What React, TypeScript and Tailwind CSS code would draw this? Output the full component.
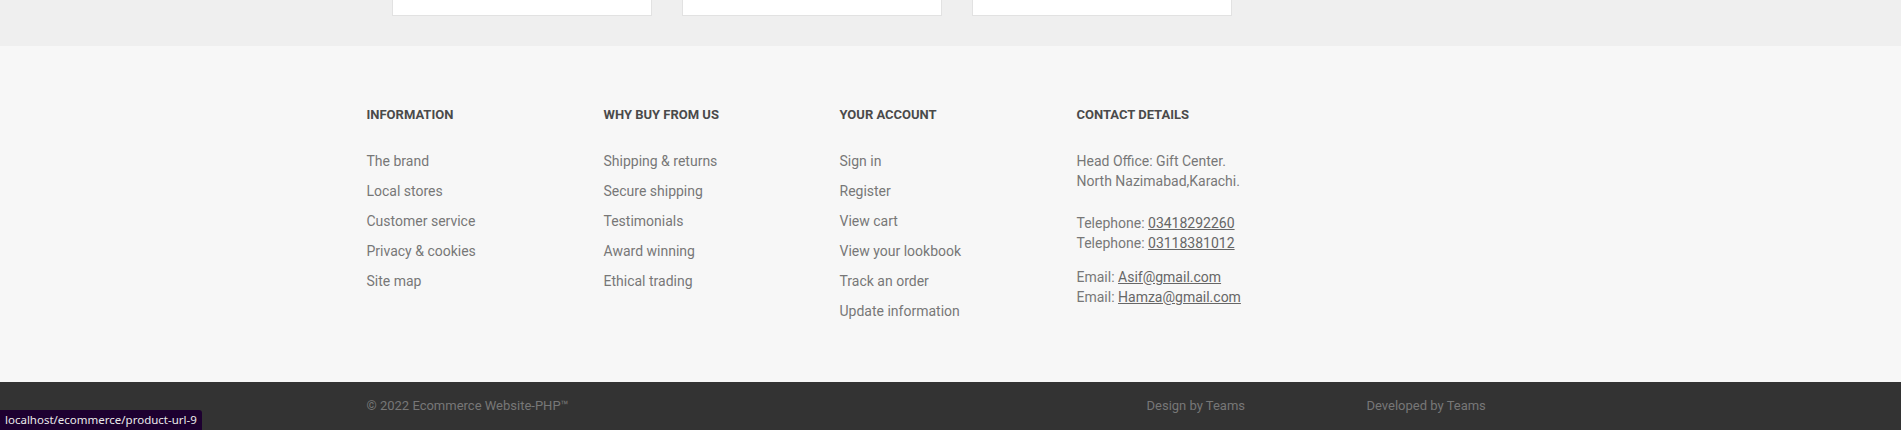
import React from 'react'

const information = ['The brand', 'Local stores', 'Customer service', 'Privacy & cookies', 'Site map']
const whyBuy = ['Shipping & returns', 'Secure shipping', 'Testimonials', 'Award winning', 'Ethical trading']
const account = ['Sign in', 'Register', 'View cart', 'View your lookbook', 'Track an order', 'Update information']

function LinkColumn({ title, links, width }: { title: string; links: string[]; width: string }) {
  return (
    <div className={`${width} shrink-0`}>
      <h4 className="text-[13px] leading-[18px] font-bold uppercase text-[#4a4a4a] mb-[27px]">{title}</h4>
      <ul className="flex flex-col gap-[10px] text-[14px] leading-[20px]">
        {links.map((l) => (
          <li key={l}>
            <a href="#" className="text-[#777]">
              {l}
            </a>
          </li>
        ))}
      </ul>
    </div>
  )
}

export default function App() {
  return (
    <div
      className="relative h-[430px] w-full overflow-hidden bg-[#f7f7f7]"
      style={{ fontFamily: 'Roboto, "Liberation Sans", sans-serif' }}
    >
      {/* product cards peeking from above */}
      <div className="h-[46px] bg-[#efefef]">
        <div className="mx-auto w-[1170px] pl-[26px] flex gap-[30px]">
          {[0, 1, 2].map((i) => (
            <div key={i} className="w-[260px] h-[16px] bg-white border-x border-b border-[#e2e2e2]" />
          ))}
        </div>
      </div>

      <footer className="h-[336px] pt-[60px]">
        <div className="mx-auto w-[1170px] pl-[1px] flex">
          <LinkColumn title="Information" links={information} width="w-[237px]" />
          <LinkColumn title="Why buy from us" links={whyBuy} width="w-[236px]" />
          <LinkColumn title="Your account" links={account} width="w-[237px]" />
          <div className="w-[237px] shrink-0 text-[14px] leading-[20px] text-[#777]">
            <h4 className="text-[13px] leading-[18px] font-bold uppercase text-[#4a4a4a] mb-[27px]">Contact details</h4>
            <p className="mb-[22px]">
              Head Office: Gift Center.
              <br />
              North Nazimabad,Karachi.
            </p>
            <p className="mb-[14px]">
              Telephone: <a href="#" className="underline text-[#666]">03418292260</a>
              <br />
              Telephone: <a href="#" className="underline text-[#666]">03118381012</a>
            </p>
            <p>
              Email: <a href="#" className="underline text-[#666]">Asif@gmail.com</a>
              <br />
              Email: <a href="#" className="underline text-[#666]">Hamza@gmail.com</a>
            </p>
          </div>
        </div>
      </footer>

      <div className="h-[48px] bg-[#333] pt-[15px]">
        <div className="mx-auto w-[1170px] pl-[1px] flex text-[13px] leading-[18px] text-[#777]">
          <p className="w-[780px]">© 2022 Ecommerce Website-PHP™</p>
          <p className="w-[220px]">Design by Teams</p>
          <p>Developed by Teams</p>
        </div>
      </div>

      {/* browser status bubble */}
      <div
        className="absolute left-0 bottom-0 h-[20px] pl-[5px] pr-[5px] bg-[#1d0030] rounded-tr-[3px] text-[11.5px] leading-[20px] text-[#eaeaea]"
        style={{ fontFamily: '"Noto Sans", "DejaVu Sans", sans-serif' }}
      >
        localhost/ecommerce/product-url-9
      </div>
    </div>
  )
}
